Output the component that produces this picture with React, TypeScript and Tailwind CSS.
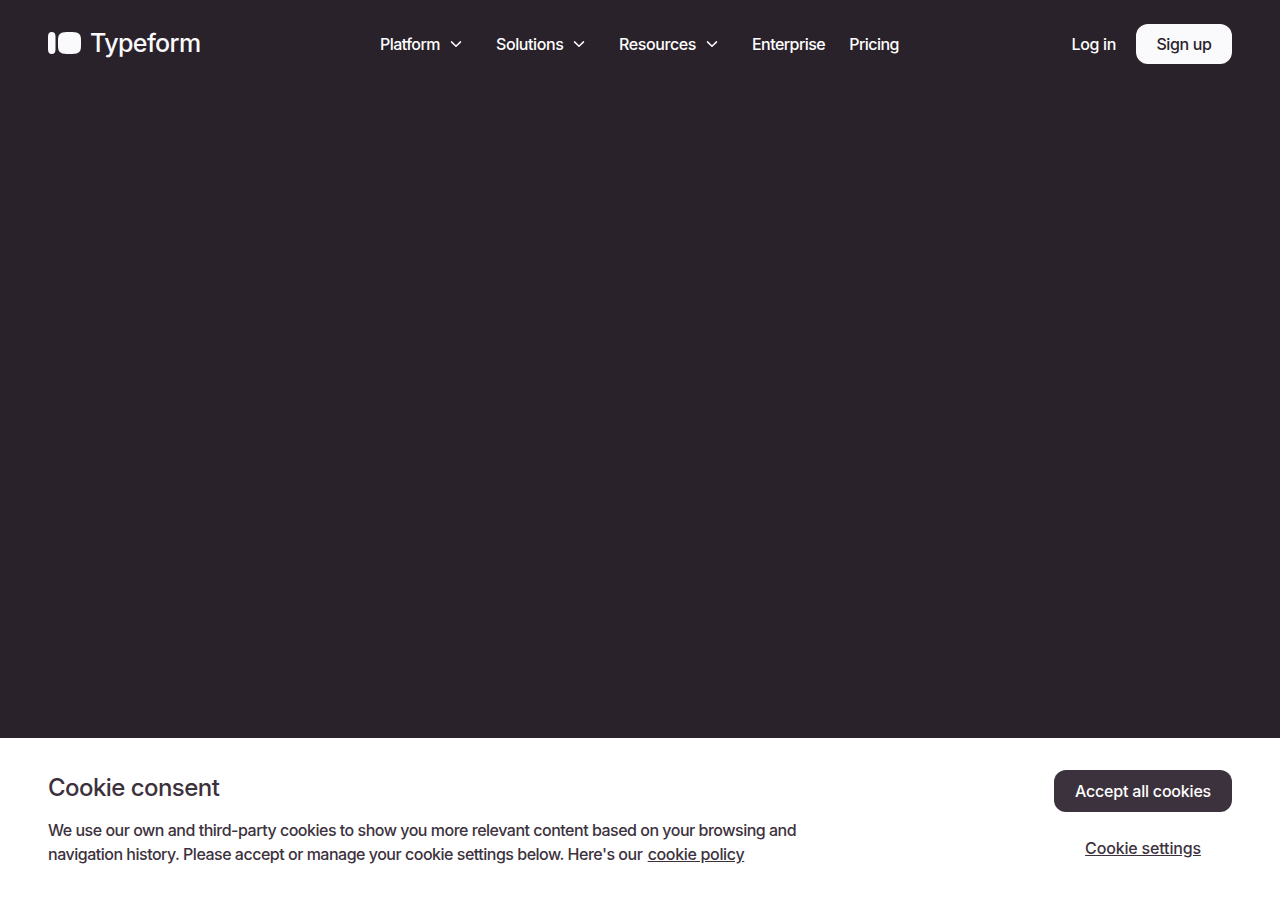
function Chevron() {
  return (
    <svg width="12" height="8" viewBox="0 0 12 8" fill="none" className="block">
      <path d="M1.5 1.9 6 6.200l4.500-4.300" stroke="#fff" strokeWidth="1.5" strokeLinecap="round" strokeLinejoin="round" />
    </svg>
  );
}

function Menu({ label, width }: { label: string; width: string }) {
  return (
    <button className={`mr-[34px] flex items-center justify-between ${width}`}>
      <span>{label}</span>
      <Chevron />
    </button>
  );
}

export default function App() {
  return (
    <div className="flex h-[900px] w-[1280px] flex-col bg-[#2a222b] font-['Inter',sans-serif] text-base font-medium text-white">
      <header className="flex h-[88px] shrink-0 items-center px-12">
        <a className="flex w-[332px] items-center gap-[9px]">
          <svg width="33" height="22" viewBox="0 0 33 22" fill="#fafafc" className="mb-[2px]">
            <path d="M3.750 0C6.500 0 7.500 1.800 7.500 4.800v12.400c0 3-1 4.800-3.750 4.800S0 20.200 0 17.200V4.800C0 1.800 1 0 3.750 0Z" />
            <path d="M21.500 0C29.300 0 33 .4 33 8v6c0 7.600-3.700 8-11.500 8S10 21.600 10 14V8C10 .4 13.700 0 21.500 0Z" />
          </svg>
          <span className="mb-[2px] text-[25px] leading-8 tracking-[-0.600px] text-[#fafafc]">Typeform</span>
        </a>
        <nav className="flex items-center tracking-[-0.550px]">
          <Menu label="Platform" width="w-[82px]" />
          <Menu label="Solutions" width="w-[89px] tracking-[-0.400px]" />
          <Menu label="Resources" width="w-[99px] tracking-[-0.400px]" />
          <a className="mr-6">Enterprise</a>
          <a>Pricing</a>
        </nav>
        <div className="ml-auto flex items-center gap-5 tracking-[-0.350px]">
          <a>Log in</a>
          <a className="flex h-10 w-24 items-center justify-center rounded-xl bg-[#fafafc] text-[#2a222b]">Sign up</a>
        </div>
      </header>
      <main className="flex-1" />
      <section className="flex h-[162px] shrink-0 justify-between bg-white px-12 pt-8 text-[#3c323e]">
        <div>
          <h2 className="text-2xl leading-9 font-medium tracking-[-0.550px]">Cookie consent</h2>
          <p className="mt-3 w-[780px] leading-6 tracking-[-0.490px]">
            We use our own and third-party cookies to show you more relevant content based on your browsing and
            <br />
            navigation history. Please accept or manage your cookie settings below. Here's our <a className="ml-[1.5px] tracking-[-0.330px] underline">cookie policy</a>
          </p>
        </div>
        <div className="flex flex-col items-center tracking-[-0.200px]">
          <button className="h-[42px] w-[178px] rounded-xl bg-[#3c323e] text-white">Accept all cookies</button>
          <a className="mt-6 tracking-[-0.170px] underline">Cookie settings</a>
        </div>
      </section>
    </div>
  );
}
